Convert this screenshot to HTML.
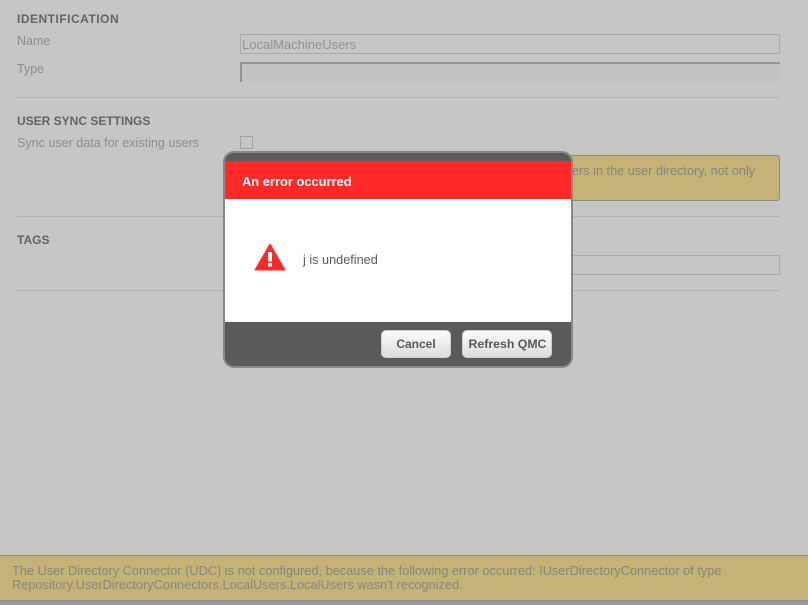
<!DOCTYPE html>
<html>
<head>
<meta charset="utf-8">
<style>
html,body{margin:0;padding:0;width:808px;height:605px;overflow:hidden;background:#c6c6c6;font-family:"Liberation Sans",sans-serif;}
.a{position:absolute;white-space:nowrap;box-sizing:border-box;}
.h{font-weight:bold;font-size:12px;color:#636363;line-height:14px;left:17px;}
.l{font-size:12.5px;color:#8c8c8c;line-height:14px;left:17px;}
.d{left:17px;width:763px;height:1px;background:#b2b2b2;}
.i{left:240px;width:540px;height:20px;border:1px solid #a9a9a9;}
.b{height:28px;top:330px;border-radius:5px;background:linear-gradient(#fbfbfb,#dcdcdc);border:1px solid #cfcfcf;color:#595959;font-weight:bold;font-size:12px;line-height:26px;text-align:center;}
</style>
</head>
<body>
<div class="a h" style="top:12px;letter-spacing:.5px;">IDENTIFICATION</div>
<div class="a l" style="top:34px;">Name</div>
<div class="a i" style="top:34px;font-size:13px;line-height:19px;color:#929292;padding-left:1px;">LocalMachineUsers</div>
<div class="a l" style="top:62px;">Type</div>
<div class="a" style="left:240px;top:62px;width:540px;height:20px;background:#c2c2c2;border-top:2px solid #959595;border-left:2px solid #959595;"></div>
<div class="a d" style="top:97px;"></div>
<div class="a h" style="top:114px;">USER SYNC SETTINGS</div>
<div class="a l" style="top:136px;font-size:12.55px;">Sync user data for existing users</div>
<div class="a" style="left:240px;top:136px;width:13px;height:13px;border:1px solid #a0a0a0;"></div>
<div class="a" style="left:500px;top:155px;width:280px;height:46px;background:#c4b277;border:1px solid #8a8a80;border-radius:3px;"></div>
<div class="a" style="left:572px;top:164px;font-size:12.7px;line-height:14px;color:#86867a;">ers in the user directory, not only</div>
<div class="a d" style="top:216px;"></div>
<div class="a h" style="top:233px;">TAGS</div>
<div class="a i" style="top:255px;"></div>
<div class="a d" style="top:290px;"></div>

<div class="a" style="left:0;top:555px;width:808px;height:46px;background:#c4b277;border-top:1px solid #8a8a8a;border-bottom:1px solid #8a8a8a;"></div>
<div class="a" style="left:0;top:601px;width:808px;height:4px;background:#9a9a9a;"></div>
<div class="a" style="left:12px;top:564px;font-size:12.77px;line-height:14px;color:#86867a;">The User Directory Connector (UDC) is not configured, because the following error occurred: IUserDirectoryConnector of type<br>Repository.UserDirectoryConnectors.LocalUsers.LocalUsers wasn't recognized.</div>

<div class="a" style="left:223px;top:151px;width:350px;height:217px;border:2px solid #888;border-radius:11px;background:#5a5a5a;overflow:hidden;">
  <div class="a" style="left:0;top:8px;width:346px;height:38px;background:#ff2828;color:#fff;font-weight:bold;font-size:12.9px;line-height:41px;padding-left:17px;">An error occurred</div>
  <div class="a" style="left:0;top:46px;width:346px;height:123px;background:#fff;"></div>
</div>
<svg class="a" style="left:254px;top:243px;" width="32" height="28" viewBox="0 0 32 28">
  <path d="M16 1 L31 27 L1 27 Z" fill="#ff2828" stroke="#ff2828" stroke-width="1" stroke-linejoin="round"/>
  <rect x="14" y="9" width="4" height="9.5" fill="#fff"/>
  <rect x="14" y="20" width="4" height="3.6" fill="#fff"/>
</svg>
<div class="a" style="left:303px;top:253px;font-size:12.7px;line-height:14px;color:#595959;">j is undefined</div>
<div class="a b" style="left:381px;width:70px;">Cancel</div>
<div class="a b" style="left:462px;width:90px;font-size:12.3px;padding-left:1px;">Refresh QMC</div>
</body>
</html>
